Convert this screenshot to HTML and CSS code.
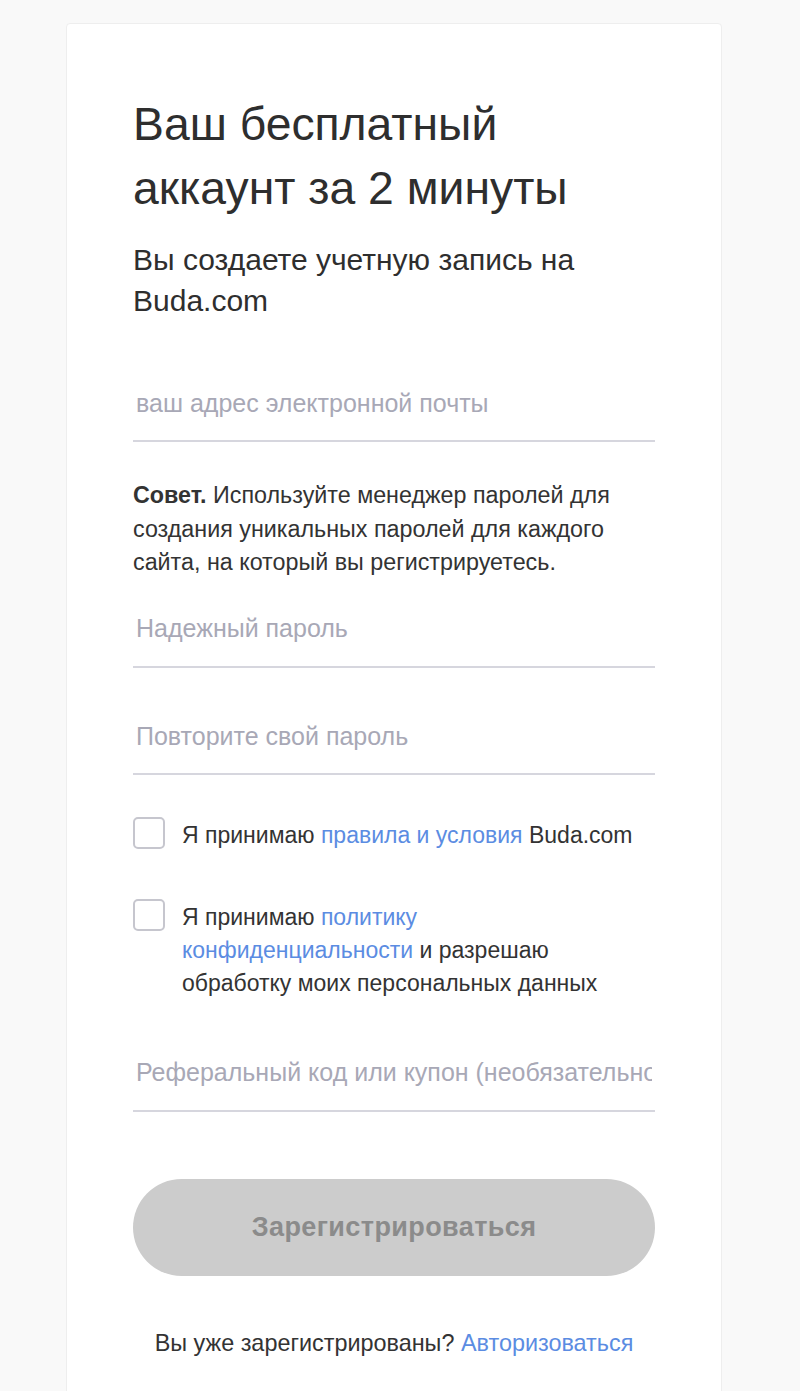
FILE: index.html
```html
<!DOCTYPE html>
<html lang="ru">
<head>
<meta charset="utf-8">
<title>Регистрация</title>
<link rel="stylesheet" href="styles.css">
</head>
<body>
<main class="card">
  <h1 class="title">Ваш бесплатный аккаунт за 2 минуты</h1>
  <p class="subtitle">Вы создаете учетную запись на Buda.com</p>

  <form class="form">
    <input class="field field-email" type="email" placeholder="ваш адрес электронной почты">

    <p class="tip"><b>Совет.</b> Используйте менеджер паролей для создания уникальных паролей для каждого сайта, на который вы регистрируетесь.</p>

    <input class="field field-pass" type="password" placeholder="Надежный пароль">
    <input class="field field-repeat" type="password" placeholder="Повторите свой пароль">

    <label class="check check-terms">
      <span class="box"></span>
      <span class="check-text">Я принимаю <a class="link" href="#">правила и условия</a> Buda.com</span>
    </label>

    <label class="check check-privacy">
      <span class="box"></span>
      <span class="check-text">Я принимаю <a class="link" href="#">политику конфиденциальности</a> и разрешаю обработку моих персональных данных</span>
    </label>

    <input class="field field-ref" type="text" placeholder="Реферальный код или купон (необязательно)">

    <button class="submit" type="button" disabled>Зарегистрироваться</button>
  </form>

  <p class="login">Вы уже зарегистрированы? <a class="link" href="#">Авторизоваться</a></p>
</main>
</body>
</html>
```

FILE: styles.css
```css
html, body {
  margin: 0;
  padding: 0;
  background: #f9f9f9;
}

body {
  font-family: "Liberation Sans", Arial, Helvetica, sans-serif;
  color: #333333;
  min-height: 1391px;
}

.card {
  box-sizing: border-box;
  width: 656px;
  margin: 23px 0 0 66px;
  padding: 68px 66px 60px;
  background: #ffffff;
  border: 1px solid #eeeeee;
  border-radius: 4px;
  min-height: 1368px;
}

.title {
  margin: 0;
  font-size: 46.3px;
  line-height: 64px;
  font-weight: 400;
  color: #2e2e2e;
}

.subtitle {
  margin: 19px 0 0;
  font-size: 30px;
  line-height: 41px;
  color: #2e2e2e;
}

.form {
  display: flex;
  flex-direction: column;
}

.field {
  box-sizing: border-box;
  display: block;
  width: 100%;
  height: 76px;
  margin: 0;
  padding: 0 3px;
  border: 0;
  border-bottom: 2px solid #d6d6de;
  background: transparent;
  font-family: inherit;
  font-size: 25px;
  color: #333333;
  outline: none;
}

.field::placeholder {
  color: #a8a8b6;
  opacity: 1;
}

.field-email { margin-top: 45px; }
.field-pass { margin-top: 12px; }
.field-repeat { margin-top: 31.5px; }
.field-ref { margin-top: 35.5px; }

.tip {
  margin: 37px 0 0;
  font-size: 23.3px;
  line-height: 33.5px;
  color: #333333;
}

.tip b {
  font-weight: 700;
}

.check {
  display: flex;
  align-items: flex-start;
  gap: 17px;
  cursor: pointer;
}

.check-terms { margin-top: 41.5px; }
.check-privacy { margin-top: 46.5px; }

.box {
  flex: none;
  box-sizing: border-box;
  width: 32px;
  height: 32px;
  border: 2px solid #c6c6ce;
  border-radius: 5px;
  background: #ffffff;
}

.check-text {
  flex: 1;
  padding: 2.5px 18px 0 0;
  font-size: 23px;
  line-height: 33px;
  color: #333333;
}

.link {
  color: #5b8ce2;
  text-decoration: none;
}

.submit {
  margin-top: 67px;
  height: 97px;
  width: 100%;
  border: 0;
  border-radius: 49px;
  background: #cccccc;
  color: #8b8b8b;
  font-family: inherit;
  font-size: 27px;
  font-weight: 700;
  letter-spacing: 0.4px;
}

.login {
  margin: 51px 0 0;
  text-align: center;
  font-size: 23.4px;
  line-height: 33px;
  color: #333333;
}
```
